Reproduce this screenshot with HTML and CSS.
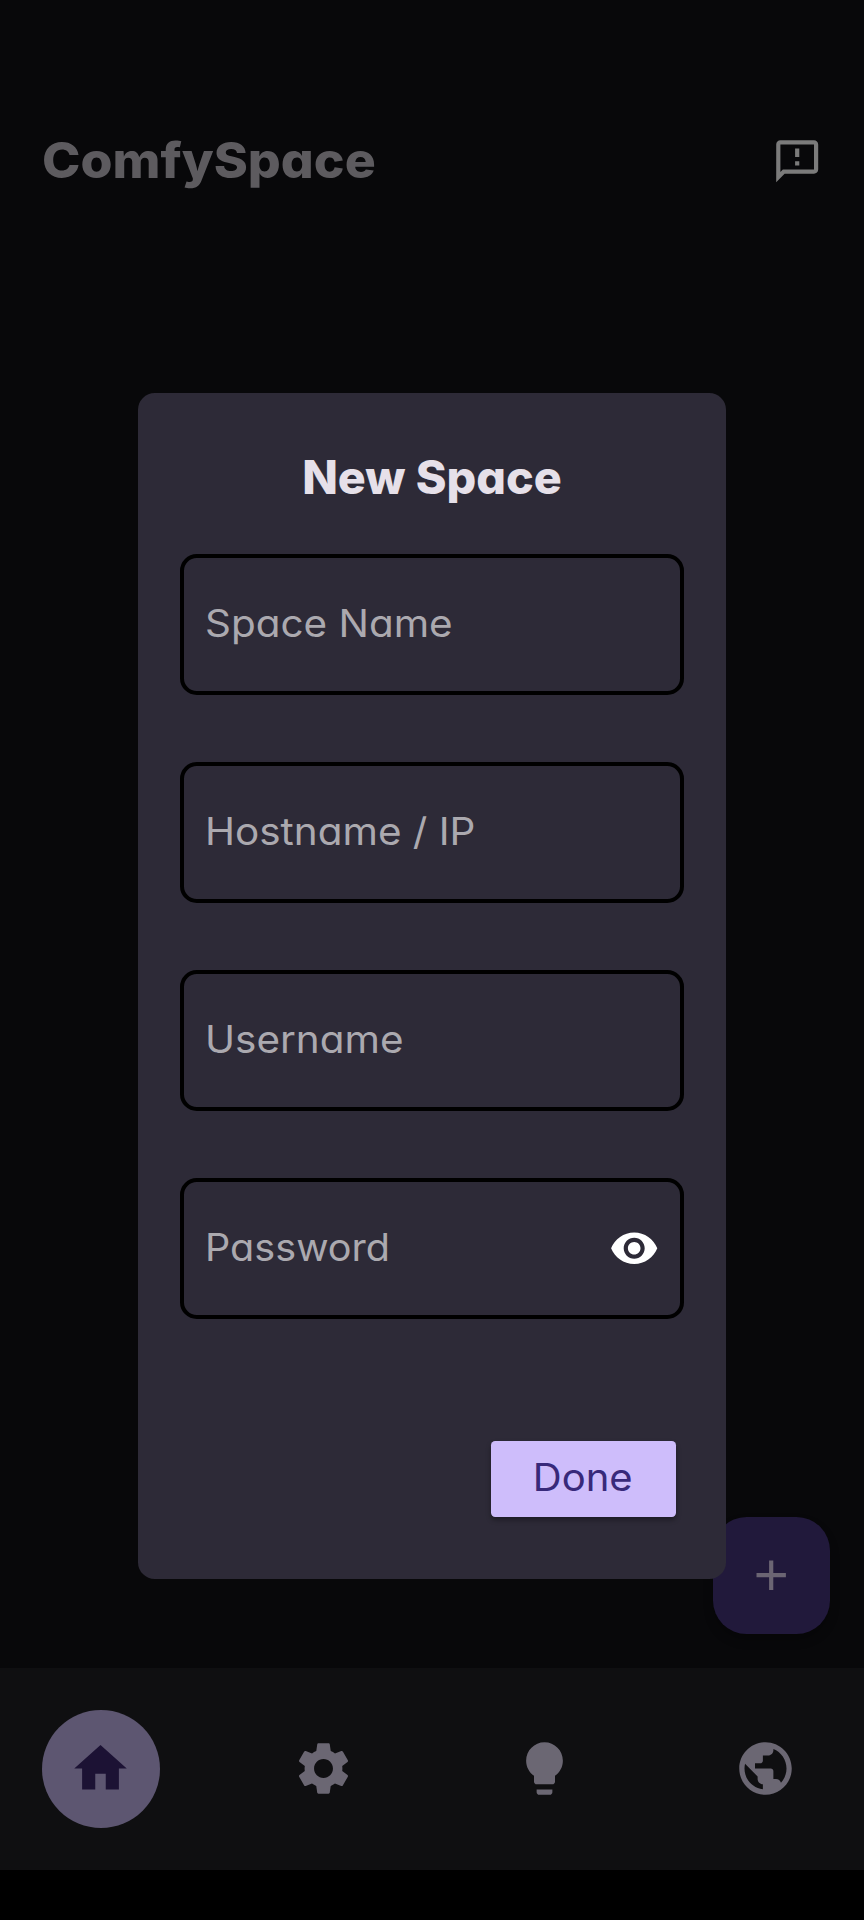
FILE: index.html
```html
<!DOCTYPE html>
<html lang="en">
<head>
<meta charset="utf-8">
<title>ComfySpace</title>
<link rel="stylesheet" href="styles.css">
</head>
<body>
<div class="app">
  <header class="header">
    <h1 class="brand">ComfySpace</h1>
    <svg class="icon icon-feedback" viewBox="0 0 24 24"><path d="M20 2H4c-1.100 0-1.990.9-1.990 2L2 22l4-4h14c1.100 0 2-.9 2-2V4c0-1.100-.9-2-2-2zm0 14H5.170L4 17.170V4h16v12zM11 12h2v2h-2zm0-6h2v4h-2z"/></svg>
  </header>
  <main class="content">
    <div class="fab"><svg class="icon" viewBox="0 0 24 24"><path d="M19 13h-6v6h-2v-6H5v-2h6V5h2v6h6v2z"/></svg></div>
  </main>
  <nav class="nav">
    <div class="nav-item nav-item-active"><svg class="nav-icon" viewBox="0 0 24 24"><path d="M10 20v-6h4v6h5v-8h3L12 3 2 12h3v8z"/></svg></div>
    <div class="nav-item nav-item-settings"><svg class="nav-icon" viewBox="0 0 24 24"><path d="M19.140 12.940c.04-.3.06-.61.06-.94 0-.32-.02-.64-.07-.94l2.030-1.580c.18-.14.23-.41.12-.61l-1.920-3.320c-.12-.22-.37-.29-.59-.22l-2.390.96c-.5-.38-1.030-.7-1.620-.94l-.36-2.540c-.04-.24-.24-.41-.48-.41h-3.840c-.24 0-.43.17-.47.41l-.36 2.540c-.59.24-1.130.57-1.620.94l-2.390-.96c-.22-.08-.47 0-.59.22L2.740 8.870c-.12.21-.08.47.12.61l2.030 1.580c-.05.3-.09.63-.09.94s.02.64.07.94l-2.030 1.580c-.18.14-.23.41-.12.61l1.920 3.320c.12.22.37.29.59.22l2.390-.96c.5.38 1.030.7 1.620.94l.36 2.540c.05.24.24.41.48.41h3.840c.24 0 .44-.17.47-.41l.36-2.540c.59-.24 1.130-.56 1.620-.94l2.390.96c.22.08.47 0 .59-.22l1.920-3.320c.12-.22.07-.47-.12-.61l-2.010-1.580zM12 15.600c-1.980 0-3.600-1.620-3.600-3.600s1.620-3.600 3.600-3.600 3.600 1.620 3.600 3.600-1.620 3.600-3.600 3.600z"/></svg></div>
    <div class="nav-item"><svg class="nav-icon" viewBox="0 0 24 24"><path d="M9 21c0 .55.45 1 1 1h4c.55 0 1-.45 1-1v-1H9v1zm3-19C8.140 2 5 5.140 5 9c0 2.380 1.190 4.470 3 5.740V17c0 .55.45 1 1 1h6c.55 0 1-.45 1-1v-2.260c1.810-1.270 3-3.360 3-5.740 0-3.860-3.140-7-7-7z"/></svg></div>
    <div class="nav-item"><svg class="nav-icon" viewBox="0 0 24 24"><path d="M12 2C6.480 2 2 6.480 2 12s4.480 10 10 10 10-4.480 10-10S17.520 2 12 2zm-1 17.930c-3.950-.49-7-3.850-7-7.930 0-.62.08-1.210.21-1.790L9 15v1c0 1.100.9 2 2 2v1.930zm6.900-2.540c-.26-.81-1-1.390-1.900-1.390h-1v-3c0-.55-.45-1-1-1H8v-2h2c.55 0 1-.45 1-1V7h2c1.100 0 2-.9 2-2v-.41c2.930 1.190 5 4.060 5 7.410 0 2.080-.8 3.970-2.100 5.390z"/></svg></div>
  </nav>
  <div class="overlay">
    <section class="dialog">
      <h2 class="title">New Space</h2>
      <div class="fields">
        <div class="field"><span class="label">Space Name</span></div>
        <div class="field"><span class="label">Hostname / IP</span></div>
        <div class="field"><span class="label">Username</span></div>
        <div class="field"><span class="label label-password">Password</span><svg class="icon icon-eye" viewBox="0 0 24 24"><path d="M12 4.500C7 4.500 2.730 7.610 1 12c1.730 4.390 6 7.500 11 7.500s9.270-3.110 11-7.500c-1.730-4.390-6-7.500-11-7.500zM12 17c-2.760 0-5-2.240-5-5s2.240-5 5-5 5 2.240 5 5-2.240 5-5 5zm0-8c-1.660 0-3 1.340-3 3s1.340 3 3 3 3-1.340 3-3-1.340-3-3-3z"/></svg></div>
      </div>
      <button class="done"><span class="done-text">Done</span></button>
    </section>
  </div>
</div>
</body>
</html>
```
FILE: styles.css
```css
* { box-sizing: border-box; margin: 0; padding: 0; }
body { background: #000; font-family: Inter, sans-serif; font-feature-settings: "cv11" 1; }
.app { position: relative; display: flex; flex-direction: column; width: 864px; height: 1920px; padding-bottom: 50px; background: #000; overflow: hidden; }
.header { display: flex; align-items: center; justify-content: space-between; height: 242px; padding: 80px 42px 0 41.500px; background: #08080a; }
.brand { font-size: 49px; line-height: 60px; font-weight: 800; color: #5d5b5f; white-space: nowrap; transform: scaleX(1.056); transform-origin: left; }
.icon { width: 50.4px; height: 50.4px; fill: currentColor; flex: none; }
.icon-feedback { color: #7b7b7b; }
.content { flex: 1; display: flex; align-items: flex-end; justify-content: flex-end; padding: 0 33.600px 34px; background: #08080a; }
.fab { display: flex; align-items: center; justify-content: center; width: 117.500px; height: 117.500px; border-radius: 33.600px; background: #21193b; color: #6b6573; box-shadow: 0 6px 10px rgba(0, 0, 0, .25); }
.nav { display: flex; align-items: center; justify-content: space-between; height: 202px; padding: 0 39px 0 42px; background: #0f0f11; color: #6b6773; }
.nav-item { display: flex; align-items: center; justify-content: center; width: 118px; height: 118px; padding-bottom: 1px; border-radius: 50%; }
.nav-item-active { background: #5d5671; color: #1c1234; padding-right: 1px; }
.nav-item-settings { margin-left: 1px; }
.nav-icon { width: 63px; height: 63px; fill: currentColor; }
.overlay { position: absolute; inset: 0; display: flex; justify-content: center; align-items: flex-start; padding-top: 393px; }
.dialog { display: flex; flex-direction: column; width: 588px; height: 1186px; padding: 54px 42px 62.500px; border-radius: 16.800px; background: #2d2a37; }
.title { height: 60px; line-height: 60px; text-align: center; font-size: 46px; font-weight: 800; color: #e6e0e9; white-space: nowrap; transform: scaleX(1.014); }
.fields { display: flex; flex-direction: column; gap: 67px; margin-top: 47px; }
.field { display: flex; align-items: center; justify-content: space-between; height: 141px; padding: 0 21px 2px; border: 4.200px solid #000; border-radius: 16.800px; font-size: 37.500px; line-height: 46px; color: #aba9af; white-space: nowrap; }
.label { transform: scaleX(1.078); transform-origin: left; }
.label-password { transform: scaleX(1.056); }
.icon-eye { color: #fff; margin-top: 2px; }
.done { align-self: flex-end; display: flex; align-items: center; justify-content: center; width: 185px; height: 76px; margin-top: auto; margin-right: 8.400px; padding-bottom: 2px; border: 0; border-radius: 4.200px; background: #cebdfb; color: #38297a; font: inherit; font-feature-settings: "cv11" 1; font-size: 37.500px; box-shadow: 0 3px 5px rgba(0, 0, 0, .35); }
.done-text { transform: scaleX(1.067); }
```
